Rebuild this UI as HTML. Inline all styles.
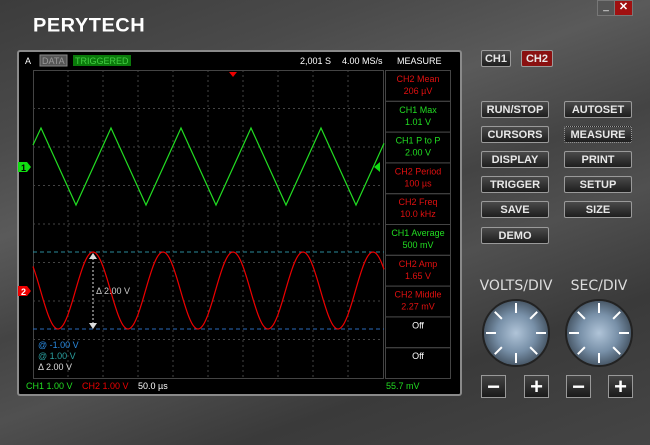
<!DOCTYPE html>
<html><head><meta charset="utf-8"><style>
body{margin:0;width:650px;height:445px;overflow:hidden;font-family:"Liberation Sans",sans-serif;
background:linear-gradient(160deg,#3c3c3c 0%,#4a4a4a 20%,#5a5a5a 35%,#444 50%,#505050 62%,#3a3a3a 78%,#454545 100%);position:relative}
.abs{position:absolute}
.btn{position:absolute;width:68px;height:17px;background:linear-gradient(#4a4a4a,#1e1e1e);border:1px solid #9a9a9a;border-radius:2px;color:#e8e8e8;font-size:11px;font-weight:bold;text-align:center;line-height:16px;box-sizing:border-box}
.pm{position:absolute;width:25px;height:23px;background:linear-gradient(#444,#1a1a1a);border:1px solid #999;box-sizing:border-box;color:#fff;font-size:22px;font-weight:bold;text-align:center;line-height:21px}
</style></head><body>
<div class="abs" style="left:33px;top:15px;color:#fff;font-size:20px;font-weight:bold;letter-spacing:0.5px;transform:scaleY(0.95)">PERYTECH</div>
<div class="abs" style="left:597px;top:0;width:16px;height:14px;background:#555;border:1px solid #777;color:#fff;font-size:10px;text-align:center;line-height:12px">_</div>
<div class="abs" style="left:614px;top:0;width:17px;height:14px;background:#a01010;border:1px solid #777;color:#fff;font-size:11px;font-weight:bold;text-align:center;line-height:13px">✕</div>

<div class="abs" style="left:17px;top:50px;width:445px;height:346px;background:#000;border:2px solid #8a8a8a;border-radius:3px;box-sizing:border-box"></div>
<svg class="abs" style="left:0;top:0" width="650" height="445">
<g font-family="Liberation Sans" font-size="9">
<text x="25" y="64" fill="#fff">A</text>
<rect x="40" y="55" width="27" height="11" fill="#555" stroke="#888"/><text x="42" y="64" fill="#999">DATA</text>
<rect x="73" y="55" width="58" height="11" fill="#0a7a0a"/><text x="75" y="64" fill="#4c4">TRIGGERED</text>
<text x="300" y="64" fill="#fff">2,001 S</text><text x="342" y="64" fill="#fff">4.00 MS/s</text><text x="397" y="64" fill="#fff">MEASURE</text>
</g>
<g stroke="#444" stroke-dasharray="2,3" stroke-width="1" id="grid"></g>
<rect x="33.5" y="70.5" width="350" height="308" fill="none" stroke="#444"/>
<polygon points="229,72 237,72 233,77" fill="#e00"/>
<line x1="33" y1="252" x2="384" y2="252" stroke="#2a8a9a" stroke-dasharray="4,3"/>
<line x1="33" y1="329" x2="384" y2="329" stroke="#2a6aba" stroke-dasharray="4,3"/>
<path id="tri" fill="none" stroke="#2d2" stroke-width="1.2"/>
<path id="sin" fill="none" stroke="#e00" stroke-width="1.2"/>
<line x1="93" y1="258" x2="93" y2="324" stroke="#ddd" stroke-dasharray="2,2"/>
<polygon points="89,259 97,259 93,253" fill="#ddd"/><polygon points="89,323 97,323 93,329" fill="#ddd"/>
<text x="96" y="294" fill="#ccc" font-size="9" font-family="Liberation Sans">Δ 2.00 V</text>
<polygon points="18,162 27,162 31,167 27,172 18,172" fill="#1d1"/><text x="21" y="171" font-size="9" font-weight="bold" fill="#000">1</text>
<polygon points="18,286 27,286 31,291 27,296 18,296" fill="#e00"/><text x="21" y="295" font-size="9" font-weight="bold" fill="#fff">2</text>
<polygon points="374,167 380,162 380,172" fill="#1d1"/>
<g font-family="Liberation Sans" font-size="9">
<text x="38" y="348" fill="#2a8ae0">@ -1.00 V</text>
<text x="38" y="359" fill="#2aa0a0">@ 1.00 V</text>
<text x="38" y="370" fill="#ddd">Δ 2.00 V</text>
<text x="26" y="389" fill="#2d2">CH1 1.00 V</text>
<text x="82" y="389" fill="#e00">CH2 1.00 V</text>
<text x="138" y="389" fill="#fff">50.0 µs</text>
<text x="386" y="389" fill="#2d2">55.7 mV</text>
</g>
<g id="meas" font-family="Liberation Sans" font-size="9" text-anchor="middle"></g>
<g fill="none" stroke="#222" stroke-width="2">
<circle cx="516" cy="333" r="33"/><circle cx="599" cy="333" r="33"/></g>
<defs><radialGradient id="kg" cx="50%" cy="50%" r="50%"><stop offset="0" stop-color="#b0c4d8"/><stop offset="0.6" stop-color="#7890a8"/><stop offset="1" stop-color="#4a5a6a"/></radialGradient></defs>
<circle cx="516" cy="333" r="32" fill="url(#kg)"/><circle cx="599" cy="333" r="32" fill="url(#kg)"/>
<g id="ticks" stroke="#fff" stroke-width="2"></g>
<text x="516" y="290" fill="#ddd" font-size="14" text-anchor="middle" font-family="DejaVu Sans">VOLTS/DIV</text>
<text x="599" y="290" fill="#ddd" font-size="14" text-anchor="middle" font-family="DejaVu Sans">SEC/DIV</text>
</svg>
<div class="btn" style="left:481px;top:50px;width:30px;height:17px">CH1</div>
<div class="btn" style="left:521px;top:50px;width:32px;height:17px;background:#8a1010">CH2</div>
<div class="btn" style="left:481px;top:101px">RUN/STOP</div><div class="btn" style="left:564px;top:101px">AUTOSET</div>
<div class="btn" style="left:481px;top:126px">CURSORS</div><div class="btn" style="left:564px;top:126px;border-style:dotted">MEASURE</div>
<div class="btn" style="left:481px;top:151px">DISPLAY</div><div class="btn" style="left:564px;top:151px">PRINT</div>
<div class="btn" style="left:481px;top:176px">TRIGGER</div><div class="btn" style="left:564px;top:176px">SETUP</div>
<div class="btn" style="left:481px;top:201px">SAVE</div><div class="btn" style="left:564px;top:201px">SIZE</div>
<div class="btn" style="left:481px;top:227px">DEMO</div>
<div class="pm" style="left:481px;top:375px">−</div><div class="pm" style="left:524px;top:375px">+</div>
<div class="pm" style="left:566px;top:375px">−</div><div class="pm" style="left:608px;top:375px">+</div>
<script>
var ns="http://www.w3.org/2000/svg";
function el(p,t,a){var e=document.createElementNS(ns,t);for(var k in a)e.setAttribute(k,a[k]);p.appendChild(e);return e}
var g=document.getElementById('grid');
for(var i=1;i<10;i++){var x=33+35*i;el(g,'line',{x1:x,y1:70,x2:x,y2:378});}
for(var j=1;j<8;j++){var y=70+38.5*j;el(g,'line',{x1:33,y1:y,x2:383,y2:y});}
var d="M33 145";
for(var p=41;p<384;p+=70){d+=" L"+p+" 128";if(p+35<=384)d+=" L"+(p+35)+" 205";}
d+=" L384 "+(205-(384-356)*77/35).toFixed(1);
document.getElementById('tri').setAttribute('d',d);
var s="";for(var x=33;x<=384;x+=1){var y=290.5-38.5*Math.cos(2*Math.PI*(x-93)/70);s+=(x==33?"M":"L")+x+" "+y.toFixed(1)+" ";}
document.getElementById('sin').setAttribute('d',s);
var m=[["CH2 Mean","206 µV","#e01010"],["CH1 Max","1.01 V","#2d2"],["CH1 P to P","2.00 V","#2d2"],["CH2 Period","100 µs","#e01010"],["CH2 Freq","10.0 kHz","#e01010"],["CH1 Average","500 mV","#2d2"],["CH2 Amp","1.65 V","#e01010"],["CH2 Middle","2.27 mV","#e01010"],["Off","","#fff"],["Off","","#fff"]];
var mg=document.getElementById('meas');
for(var i=0;i<10;i++){var y=70+30.8*i;el(mg,'rect',{x:385.5,y:y+0.5,width:65,height:30.8,fill:'none',stroke:'#444'});
var t=el(mg,'text',{x:418,y:y+12,fill:m[i][2]});t.textContent=m[i][0];
if(m[i][1]){t=el(mg,'text',{x:418,y:y+24,fill:m[i][2]});t.textContent=m[i][1];}}
var tk=document.getElementById('ticks');
[516,599].forEach(function(cx){for(var a=0;a<8;a++){var an=a*Math.PI/4;var c=Math.cos(an),sn=Math.sin(an);
el(tk,'line',{x1:cx+c*20,y1:333+sn*20,x2:cx+c*30,y2:333+sn*30});}});
</script>
</body></html>
